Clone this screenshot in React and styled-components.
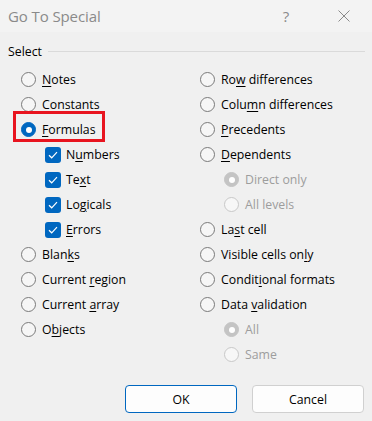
import React from "react";
import styled, { createGlobalStyle } from "styled-components";

const Global = createGlobalStyle`
  html, body { margin: 0; padding: 0; background: #f0f0f0; }
  body { font-family: "Open Sans", "Noto Sans", sans-serif; font-size: 12.3px; color: #000; }
  * { box-sizing: border-box; }
`;

const Window = styled.div`
  width: 372px;
  height: 421px;
  background: #f0f0f0;
  display: flex;
  flex-direction: column;
`;

const TitleBar = styled.div`
  height: 32px;
  background: #f3f3f3;
  display: flex;
  align-items: center;
  padding-left: 8px;
  padding-right: 5px;
  gap: 12px;
`;

const Title = styled.div`
  flex: 1;
  font-size: 15px;
  color: #8a8a8a;
  letter-spacing: -0.1px;
`;

const TitleButton = styled.div`
  width: 46px;
  height: 32px;
  display: flex;
  align-items: center;
  justify-content: center;
  color: #8a8a8a;
  font-size: 15px;
`;

const Body = styled.div`
  flex: 1;
  padding: 0 8px;
  display: flex;
  flex-direction: column;
`;

const GroupHeader = styled.div`
  margin-top: 10px;
  height: 18px;
  display: flex;
  align-items: center;
  gap: 6px;
  &::after {
    content: "";
    flex: 1;
    height: 1px;
    background: #dadada;
    margin-right: -1px;
  }
`;

const Grid = styled.div`
  margin-top: 7px;
  padding-left: 13px;
  display: grid;
  grid-template-columns: 179px 1fr;
`;

const Column = styled.div`
  display: flex;
  flex-direction: column;
`;

const Row = styled.div`
  height: 25px;
  display: flex;
  align-items: center;
  gap: ${(p) => (p.$check ? 5 : 6)}px;
  padding-left: ${(p) => p.$indent || 0}px;
  color: ${(p) => (p.$disabled ? "#9d9d9d" : "#000")};
  position: relative;
  white-space: nowrap;
`;

const RadioCircle = styled.span`
  width: 15px;
  height: 15px;
  border-radius: 50%;
  flex: none;
  position: relative;
  border: 1px solid ${(p) => (p.$checked ? (p.$disabled ? "#c4c4c4" : "#0067c0") : p.$disabled ? "#c8c8c8" : "#7a7a7a")};
  background: ${(p) => (p.$checked ? (p.$disabled ? "#c4c4c4" : "#0067c0") : p.$disabled ? "#f7f7f7" : "#f6f6f6")};
  &::after {
    content: "";
    display: ${(p) => (p.$checked ? "block" : "none")};
    position: absolute;
    left: 50%;
    top: 50%;
    width: 6px;
    height: 6px;
    margin: -3px 0 0 -3px;
    border-radius: 50%;
    background: #fff;
  }
`;

const CheckBox = styled.span`
  width: 16px;
  height: 16px;
  border-radius: 3px;
  background: #0067c0;
  flex: none;
  display: flex;
  align-items: center;
  justify-content: center;
`;

const Key = styled.u`
  text-decoration: underline;
  text-underline-offset: 2px;
  text-decoration-thickness: 1px;
`;

const Highlight = styled.span`
  position: absolute;
  left: -8px;
  top: -6px;
  width: 92px;
  height: 31px;
  border: 3px solid #e8141f;
  pointer-events: none;
`;

const Buttons = styled.div`
  margin-top: auto;
  margin-bottom: 8px;
  display: flex;
  justify-content: flex-end;
  gap: 15px;
`;

const Button = styled.button`
  width: 112px;
  height: 28px;
  border-radius: 4px;
  background: #fdfdfd;
  border: 1px solid ${(p) => (p.$primary ? "#0067c0" : "#d0d0d0")};
  font-family: inherit;
  font-size: 12.3px;
  color: #000;
  padding: 0;
`;

const Label = ({ text, k }) => {
  if (k == null) return <span>{text}</span>;
  return (
    <span>
      {text.slice(0, k)}
      <Key>{text[k]}</Key>
      {text.slice(k + 1)}
    </span>
  );
};

const Radio = ({ text, k, checked, disabled, indent, highlight }) => (
  <Row $disabled={disabled} $indent={indent}>
    {highlight && <Highlight />}
    <RadioCircle $checked={checked} $disabled={disabled} />
    <Label text={text} k={k} />
  </Row>
);

const Check = ({ text, k }) => (
  <Row $check $indent={24}>
    <CheckBox>
      <svg width="10" height="8" viewBox="0 0 10 8">
        <path d="M1 4.2 L3.7 6.8 L9 1.2" fill="none" stroke="#fff" strokeWidth="1.2" />
      </svg>
    </CheckBox>
    <Label text={text} k={k} />
  </Row>
);

export default function App() {
  return (
    <>
      <Global />
      <Window>
        <TitleBar>
          <Title>Go To Special</Title>
          <TitleButton>?</TitleButton>
          <TitleButton>
            <svg width="12" height="12" viewBox="0 0 12 12">
              <path d="M0.5 0.5 L11.5 11.5 M11.5 0.5 L0.5 11.5" stroke="#8a8a8a" strokeWidth="1" />
            </svg>
          </TitleButton>
        </TitleBar>
        <Body>
          <GroupHeader>Select</GroupHeader>
          <Grid>
            <Column>
              <Radio text="Notes" k={0} />
              <Radio text="Constants" k={1} />
              <Radio text="Formulas" k={0} checked highlight />
              <Check text="Numbers" k={1} />
              <Check text="Text" k={2} />
              <Check text="Logicals" k={2} />
              <Check text="Errors" k={0} />
              <Radio text="Blanks" k={4} />
              <Radio text="Current region" k={8} />
              <Radio text="Current array" k={8} />
              <Radio text="Objects" k={1} />
            </Column>
            <Column>
              <Radio text="Row differences" k={2} />
              <Radio text="Column differences" k={4} />
              <Radio text="Precedents" k={0} />
              <Radio text="Dependents" k={0} />
              <Radio text="Direct only" indent={24} disabled checked />
              <Radio text="All levels" indent={24} disabled />
              <Radio text="Last cell" k={2} />
              <Radio text="Visible cells only" k={16} />
              <Radio text="Conditional formats" k={6} />
              <Radio text="Data validation" k={5} />
              <Radio text="All" indent={24} disabled checked />
              <Radio text="Same" indent={24} disabled />
            </Column>
          </Grid>
          <Buttons>
            <Button $primary>OK</Button>
            <Button>Cancel</Button>
          </Buttons>
        </Body>
      </Window>
    </>
  );
}
